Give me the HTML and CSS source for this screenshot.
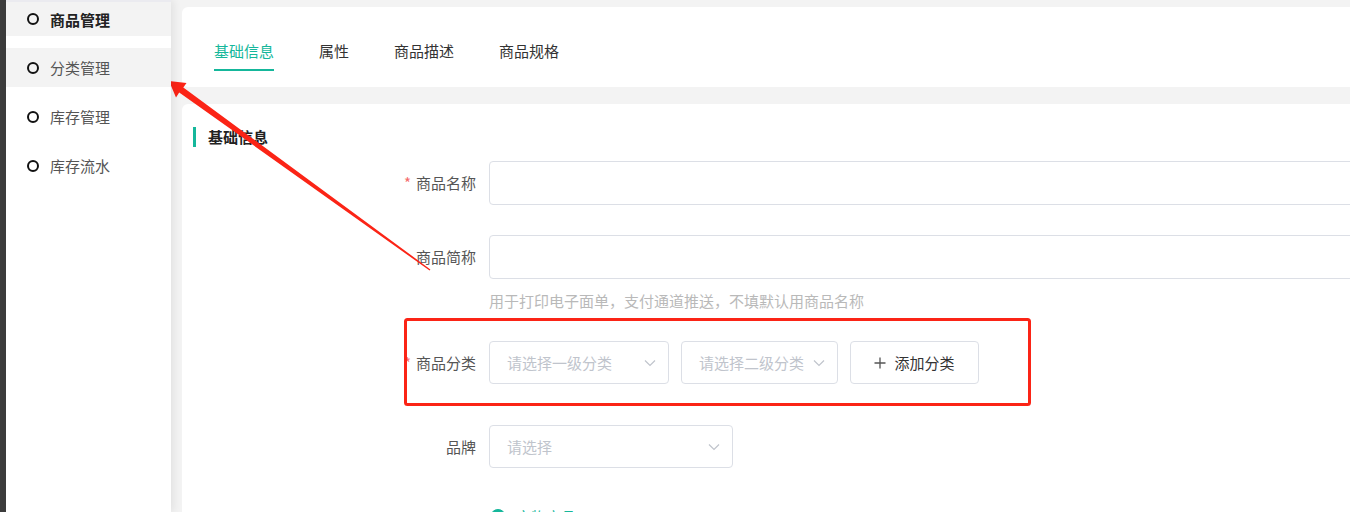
FILE: index.html
```html
<!DOCTYPE html>
<html lang="zh-CN">
<head>
  <meta charset="UTF-8">
  <title>商品编辑</title>
  <link rel="stylesheet" href="styles.css">
</head>
<body>
  <div class="layout">
    <div class="edge"></div>

    <aside class="sidebar">
      <ul class="menu">
        <li class="menu-item group"><span class="dot"></span>商品管理</li>
        <li class="menu-item current"><span class="dot"></span>分类管理</li>
        <li class="menu-item"><span class="dot"></span>库存管理</li>
        <li class="menu-item"><span class="dot"></span>库存流水</li>
      </ul>
    </aside>

    <main class="main">
      <div class="card tabs-card">
        <div class="tabs">
          <span class="tab active">基础信息</span>
          <span class="tab">属性</span>
          <span class="tab">商品描述</span>
          <span class="tab">商品规格</span>
        </div>
      </div>

      <div class="card form-card">
        <div class="section-title">基础信息</div>

        <form class="goods-form">
          <div class="form-row">
            <label class="form-label required">商品名称</label>
            <div class="form-control">
              <input type="text" class="text-input">
            </div>
          </div>

          <div class="form-row">
            <label class="form-label">商品简称</label>
            <div class="form-control">
              <input type="text" class="text-input">
              <div class="hint">用于打印电子面单，支付通道推送，不填默认用商品名称</div>
            </div>
          </div>

          <div class="form-row row-category">
            <label class="form-label required">商品分类</label>
            <div class="form-control inline">
              <div class="select select-first">
                <span class="placeholder">请选择一级分类</span>
                <svg class="chevron" width="12" height="8" viewBox="0 0 12 8"><polyline points="1,1.5 6,6.5 11,1.5" fill="none" stroke="#c0c4cc" stroke-width="1.2"/></svg>
              </div>
              <div class="select select-second">
                <span class="placeholder">请选择二级分类</span>
                <svg class="chevron" width="12" height="8" viewBox="0 0 12 8"><polyline points="1,1.5 6,6.5 11,1.5" fill="none" stroke="#c0c4cc" stroke-width="1.2"/></svg>
              </div>
              <button type="button" class="btn-add">
                <svg width="12" height="12" viewBox="0 0 12 12"><path d="M6 0.5V11.5M0.5 6H11.5" stroke="#555" stroke-width="1.3"/></svg>
                添加分类
              </button>
            </div>
          </div>

          <div class="form-row row-brand">
            <label class="form-label">品牌</label>
            <div class="form-control">
              <div class="select select-brand">
                <span class="placeholder">请选择</span>
                <svg class="chevron" width="12" height="8" viewBox="0 0 12 8"><polyline points="1,1.5 6,6.5 11,1.5" fill="none" stroke="#c0c4cc" stroke-width="1.2"/></svg>
              </div>
            </div>
          </div>

          <div class="form-row row-radio">
            <label class="form-label"></label>
            <div class="form-control inline">
              <span class="radio checked"></span>
              <span class="radio-text">实物商品</span>
            </div>
          </div>
        </form>
      </div>
    </main>
  </div>

  <!-- screenshot markup: boxes and arrow drawn over the page -->
  <svg class="annotations" width="1350" height="512" viewBox="0 0 1350 512">
    <rect x="40.5" y="48.5" width="119" height="50" rx="2" fill="none" stroke="#fb2416" stroke-width="3"/>
    <rect x="405.5" y="319.5" width="624" height="85" rx="2" fill="none" stroke="#fb2416" stroke-width="3"/>
    <polygon points="169,81 186.5,83 183.3,87.6 430.4,269.4 429.6,270.6 179.2,92.4 176,97.5" fill="#fb2416"/>
  </svg>
</body>
</html>
```

FILE: styles.css
```css
body {
  margin: 0;
  font-family: "Noto Sans CJK SC", "Noto Sans", sans-serif;
  font-size: 15px;
  color: #333;
  background: #f3f3f3;
  overflow: hidden;
}
.layout {
  display: flex;
  height: 512px;
}
.edge {
  flex: 0 0 6px;
  background: #3c3c3c;
}
.sidebar {
  flex: 0 0 165px;
  background: #fff;
  box-shadow: 3px 0 8px rgba(0,0,0,0.07);
  position: relative;
  z-index: 1;
}
.menu {
  list-style: none;
  margin: 0;
  padding: 0;
  border-top: 2px solid #ebebf0;
}
.menu-item {
  display: flex;
  align-items: center;
  height: 39px;
  margin-bottom: 10px;
  padding-left: 21px;
  color: #555;
}
.menu-item:first-child {
  height: 34px;
  margin-bottom: 12px;
}
.menu-item.group {
  font-weight: 700;
  color: #222;
  background: #f3f3f3;
}
.menu-item.current {
  background: #f3f3f3;
}
.dot {
  width: 8px;
  height: 8px;
  border: 2px solid #111;
  border-radius: 50%;
  margin-right: 11px;
}
.main {
  flex: 0 0 1220px;
  padding: 7px 0 0 11px;
}
.card {
  background: #fff;
  border-radius: 6px 0 0 6px;
}
.tabs-card {
  height: 80px;
  margin-bottom: 17px;
}
.tabs {
  display: flex;
  gap: 45px;
  padding-left: 32px;
}
.tab {
  padding: 34px 0 8px;
  line-height: 20px;
  color: #333;
  border-bottom: 2px solid transparent;
}
.tab.active {
  color: #15b79b;
  border-bottom-color: #15b79b;
}
.form-card {
  height: 420px;
  padding: 23px 20px 0 11px;
}
.section-title {
  border-left: 3px solid #15b79b;
  padding-left: 12px;
  line-height: 20px;
  font-weight: 700;
  color: #222;
  margin-bottom: 14px;
}
.goods-form {
  display: flex;
  flex-direction: column;
}
.form-row {
  display: grid;
  grid-template-columns: 296px 1fr;
  margin-bottom: 30px;
}
.form-label {
  text-align: right;
  padding-right: 13px;
  line-height: 44px;
  color: #555;
}
.form-label.required::before {
  content: "*";
  color: #f56c6c;
  margin-right: 5px;
}
.text-input {
  display: block;
  width: 100%;
  height: 44px;
  box-sizing: border-box;
  border: 1px solid #dcdfe6;
  border-radius: 4px;
  font: inherit;
  outline: none;
}
.hint {
  margin-top: 12px;
  line-height: 20px;
  color: #b9b9b9;
}
.inline {
  display: flex;
  align-items: center;
  gap: 12px;
}
.row-category {
  margin-bottom: 41px;
}
.row-category .form-label,
.row-brand .form-label {
  line-height: 43px;
}
.select {
  height: 43px;
  box-sizing: border-box;
  border: 1px solid #dcdfe6;
  border-radius: 4px;
  display: flex;
  align-items: center;
  justify-content: space-between;
  padding: 0 12px 0 17px;
}
.placeholder {
  color: #c0c4cc;
}
.select-first {
  width: 180px;
}
.select-second {
  width: 157px;
}
.select-brand {
  width: 244px;
}
.btn-add {
  height: 43px;
  width: 129px;
  border: 1px solid #dcdfe6;
  border-radius: 4px;
  background: #fff;
  font: inherit;
  color: #333;
  display: flex;
  align-items: center;
  justify-content: center;
  gap: 8px;
}
.row-brand {
  margin-bottom: 38px;
}
.row-radio .form-label {
  line-height: 20px;
}
.radio {
  width: 14px;
  height: 14px;
  border-radius: 50%;
  border: 1px solid #15b79b;
  background: #15b79b;
  margin-left: 1px;
}
.radio-text {
  color: #15b79b;
  margin-left: -2px;
}
.annotations {
  position: absolute;
  top: 0;
  left: 0;
  pointer-events: none;
}
```
